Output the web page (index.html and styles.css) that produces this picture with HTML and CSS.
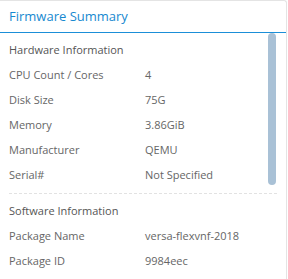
FILE: index.html
```html
<!DOCTYPE html>
<html lang="en">
<head>
  <meta charset="UTF-8">
  <title>Firmware Summary</title>
  <link rel="stylesheet" href="styles.css">
</head>
<body>

  <div class="card">
    <div class="card-header">Firmware Summary</div>

    <div class="card-body">
      <!-- Hardware -->
      <div class="group">
        <div class="group-title">Hardware Information</div>
        <div class="row"><span class="label">CPU Count / Cores</span><span class="value">4</span></div>
        <div class="row"><span class="label">Disk Size</span><span class="value">75G</span></div>
        <div class="row"><span class="label">Memory</span><span class="value">3.86GiB</span></div>
        <div class="row"><span class="label">Manufacturer</span><span class="value">QEMU</span></div>
        <div class="row"><span class="label">Serial#</span><span class="value">Not Specified</span></div>
      </div>

      <!-- Software -->
      <div class="group">
        <div class="group-title">Software Information</div>
        <div class="row"><span class="label">Package Name</span><span class="value">versa-flexvnf-2018</span></div>
        <div class="row"><span class="label">Package ID</span><span class="value">9984eec</span></div>
      </div>

      <div class="scroll-rail"><div class="scroll-thumb"></div></div>
    </div>
  </div>

</body>
</html>
```

FILE: styles.css
```css
* {
  margin: 0;
  padding: 0;
  box-sizing: border-box;
}

body {
  font-family: 'Open Sans', sans-serif;
  background: #fff;
  color: #666;
  overflow: hidden;
}

.card {
  width: 287px;
  height: 279px;
  border: 1px solid #e4e4e4;
  border-left: none;
  border-bottom: none;
  border-top-right-radius: 3px;
  background: #fff;
  overflow: hidden;
}

.card-header {
  height: 32px;
  padding: 0 9px;
  line-height: 31px;
  font-size: 13px;
  color: #1789d0;
  border-bottom: 1px solid #1b8fd8;
}

.card-body {
  position: relative;
  padding: 5px 9px 0 9px;
}

.group {
  padding-bottom: 5px;
}

.group + .group {
  border-top: 1px dashed #e2e2e2;
  padding-top: 5px;
}

.group-title,
.row {
  height: 25px;
  line-height: 24px;
  font-size: 11px;
}

.group-title {
  color: #555;
}

.row {
  display: flex;
}

.label {
  width: 136px;
}

.value {
  color: #666;
}

.scroll-rail {
  position: absolute;
  top: 0;
  right: 10px;
  width: 8px;
}

.scroll-thumb {
  height: 152px;
  background: #a9c1d6;
  border-radius: 4px;
}
```
